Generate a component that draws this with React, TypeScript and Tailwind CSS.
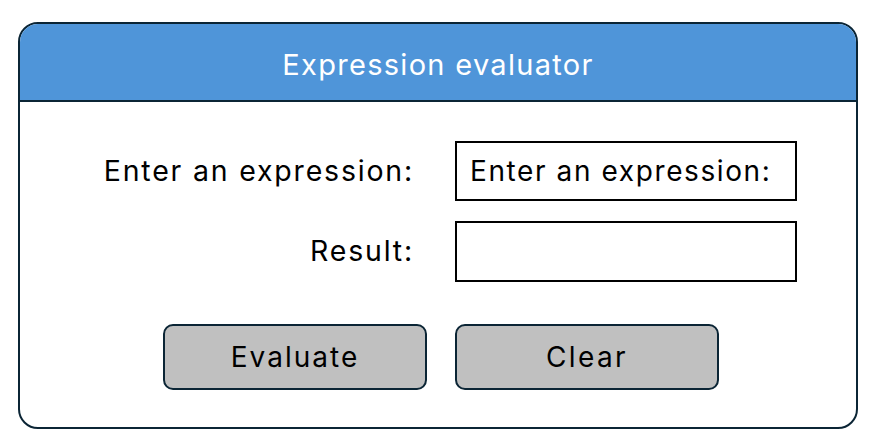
export default function App() {
  const font = { fontFamily: 'Inter, "Noto Sans", sans-serif' };
  return (
    <div className="w-[876px] h-[448px] bg-white relative overflow-hidden" style={font}>
      <div className="absolute left-[18px] top-[22px] w-[840px] h-[407px] border-[2.5px] border-[#0b2535] rounded-[20px] overflow-hidden flex flex-col bg-white">
        <div className="h-[78px] pt-[5px] bg-[#4f95d9] border-b-[2.5px] border-[#0b2535] flex items-center justify-center text-white text-[29px] tracking-[1.3px]">
          Expression evaluator
        </div>
        <div className="flex flex-col pt-[39px]">
          <div className="flex items-center h-[60px]">
            <div className="w-[394px] text-right text-[28.5px] text-black tracking-[1.8px]">Enter an expression:</div>
            <div className="ml-[41px] w-[342px] h-[60px] border-[2.5px] border-black flex items-center pl-[13px] text-[28px] text-black tracking-[1.6px] whitespace-nowrap overflow-hidden">
              Enter an expression:
            </div>
          </div>
          <div className="flex items-center h-[61px] mt-[20px]">
            <div className="w-[394px] text-right text-[28.5px] text-black tracking-[1.8px]">Result:</div>
            <div className="ml-[41px] w-[342px] h-[61px] border-[2.5px] border-black"></div>
          </div>
          <div className="flex mt-[42px] ml-[143px] gap-[28px]">
            <div className="w-[264px] h-[66px] bg-[#c0c0c0] border-[2.5px] border-[#0b2535] rounded-[10px] flex items-center justify-center text-[28px] text-black tracking-[2px]">Evaluate</div>
            <div className="w-[264px] h-[66px] bg-[#c0c0c0] border-[2.5px] border-[#0b2535] rounded-[10px] flex items-center justify-center text-[28px] text-black tracking-[2.4px]">Clear</div>
          </div>
        </div>
      </div>
    </div>
  );
}
